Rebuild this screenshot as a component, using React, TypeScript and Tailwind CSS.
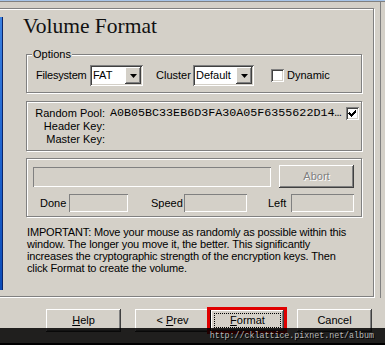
import React from "react";

const raised =
  "shadow-[inset_-1px_-1px_0_#404040,inset_1px_1px_0_#ffffff,inset_-2px_-2px_0_#808080,inset_2px_2px_0_#d4d0c8]";
const sunken2 =
  "shadow-[inset_1px_1px_0_#808080,inset_-1px_-1px_0_#ffffff,inset_2px_2px_0_#404040,inset_-2px_-2px_0_#d4d0c8]";
const sunken1 = "shadow-[inset_1px_1px_0_#808080,inset_-1px_-1px_0_#ffffff]";
const etched =
  "border border-[#808080] shadow-[inset_1px_1px_0_#ffffff,1px_1px_0_#ffffff]";

function Combo({ value, w }: { value: string; w: string }) {
  return (
    <div className={`${w} h-[21px] flex items-center bg-white ${sunken2}`}>
      <span className="pl-[3px] leading-[13px]">{value}</span>
      <div
        className={`ml-auto mr-[2px] w-[16px] h-[17px] bg-[#d4d0c8] flex items-center justify-center ${raised}`}
      >
        <svg width="7" height="4" viewBox="0 0 7 4">
          <polygon points="0,0 7,0 3.5,4" fill="#000" />
        </svg>
      </div>
    </div>
  );
}

function Check({ checked }: { checked?: boolean }) {
  return (
    <div className={`w-[13px] h-[13px] shrink-0 bg-white flex items-center justify-center ${sunken2}`}>
      {checked && (
        <svg width="9" height="9" viewBox="0 0 9 9" shapeRendering="crispEdges">
          <path d="M1 3h1v1h1v1h1v-1h1v-1h1v-1h1v-1h1v3h-1v1h-1v1h-1v1h-1v1h-1v-1h-1v-1h-1v-1h-1z" fill="#000" />
        </svg>
      )}
    </div>
  );
}

function Btn({ children, cls = "" }: { children: React.ReactNode; cls?: string }) {
  return (
    <div className={`w-[75px] h-[23px] flex items-center justify-center bg-[#d4d0c8] ${raised} ${cls}`}>
      {children}
    </div>
  );
}

export default function App() {
  return (
    <div className="w-[385px] h-[345px] relative overflow-hidden bg-[#d4d0c8] text-black text-[11px] leading-[13px] font-['Liberation_Sans',Arial,sans-serif]">
      <div className="h-px bg-[#a6c4e8]" />
      <div className="h-px bg-[#808080]" />
      <div className="flex h-[296px]">
        <div className={`ml-[-8px] mt-[6px] w-[382px] h-[289px] shrink-0 flex ${etched}`}>
          <div className="mt-[8px] w-[10px] h-[273px] shrink-0 bg-gradient-to-b from-[#3a80e0] via-[#1f64d0] to-[#0c4cb8] border-r border-[#0a246a]" />
          <div className="ml-[23px] w-[337px] flex flex-col">
            <div className="mt-[5px] ml-[-3px] h-[24px] leading-[24px] text-[21.5px] text-[#111] font-['Liberation_Serif','Times_New_Roman',serif] whitespace-nowrap">
              Volume Format
            </div>

            <div className={`relative mt-[16px] w-[336px] pt-[10px] pb-[6px] ${etched}`}>
              <span className="absolute top-[-7px] left-[5px] px-px bg-[#d4d0c8] leading-[13px]">
                Options
              </span>
              <div className="flex items-center h-[21px]">
                <span className="ml-[9px] w-[54px] whitespace-nowrap tracking-[-0.2px]">Filesystem</span>
                <Combo value="FAT" w="w-[53px]" />
                <span className="ml-[13px] w-[37px] whitespace-nowrap">Cluster</span>
                <Combo value="Default" w="w-[61px]" />
                <div className="ml-[17px]">
                  <Check />
                </div>
                <span className="ml-[3px]">Dynamic</span>
              </div>
            </div>

            <div className={`mt-[8px] w-[336px] pt-[5px] pb-[4px] ${etched}`}>
              <div className="flex items-center h-[13px]">
                <span className="w-[78px] text-right whitespace-nowrap">Random Pool:</span>
                <span className="ml-[5px] text-[11.7px] leading-[13px] font-['Liberation_Mono','Courier_New',monospace] whitespace-nowrap">
                  A0B05BC33EB6D3FA30A05F6355622D14…
                </span>
                <div className="ml-auto mr-[2px]">
                  <Check checked />
                </div>
              </div>
              <div className="flex items-center h-[13px]">
                <span className="w-[78px] text-right whitespace-nowrap">Header Key:</span>
              </div>
              <div className="flex items-center h-[13px]">
                <span className="w-[78px] text-right whitespace-nowrap">Master Key:</span>
              </div>
            </div>

            <div className={`mt-[7px] w-[336px] pt-[6px] pb-[4px] ${etched}`}>
              <div className="flex items-center h-[23px]">
                <div className={`ml-[6px] w-[238px] h-[20px] ${sunken1}`} />
                <Btn cls="ml-[8px]">
                  <span className="text-[#808080] [text-shadow:1px_1px_0_#ffffff]">Abort</span>
                </Btn>
              </div>
              <div className="mt-[6px] flex items-center h-[18px]">
                <span className="ml-[13px] w-[27px] whitespace-nowrap">Done</span>
                <div className={`ml-[2px] w-[59px] h-[18px] ${sunken1}`} />
                <span className="ml-[23px] w-[31px] whitespace-nowrap">Speed</span>
                <div className={`ml-[2px] w-[63px] h-[18px] ${sunken1}`} />
                <span className="ml-[21px] w-[21px] whitespace-nowrap">Left</span>
                <div className={`ml-[2px] w-[63px] h-[18px] ${sunken1}`} />
              </div>
            </div>

            <p className="mt-[9px] ml-px leading-[12px] tracking-[-0.15px] whitespace-nowrap">
              IMPORTANT: Move your mouse as randomly as possible within this
              <br />
              window. The longer you move it, the better. This significantly
              <br />
              increases the cryptographic strength of the encryption keys. Then
              <br />
              click Format to create the volume.
            </p>
          </div>
        </div>
        <div className="ml-[6px] w-px bg-[#808080]" />
      </div>

      <div className="mt-[11px] flex">
        <Btn cls="ml-[46px]">
          <span>
            <span className="underline">H</span>elp
          </span>
        </Btn>
        <Btn cls="ml-[14px]">
          <span>
            &lt; <span className="underline">P</span>rev
          </span>
        </Btn>
        <div className="relative w-[75px] h-[23px] border border-black">
          <div className={`w-full h-full flex items-center justify-center ${raised}`}>
            <span>
              <span className="underline">F</span>ormat
            </span>
          </div>
          <div className="absolute inset-[3px] border border-dotted border-black" />
        </div>
        <Btn cls="ml-[12px]">Cancel</Btn>
      </div>

      <div className="absolute left-[207px] top-[307px] w-[80px] h-[27px] border-[3px] border-[#e00000]" />

      <div className="absolute left-0 top-[328px] w-full h-[15px] bg-black/[0.85] flex items-center justify-end pr-[11px]">
        <span className="text-[8.3px] leading-[10px] text-[#b8b8b8] font-['Liberation_Mono','Courier_New',monospace] [text-shadow:1px_1px_0_#000000] whitespace-nowrap">
          http://cklattice.pixnet.net/album
        </span>
      </div>
      <div className="absolute left-0 top-[343px] w-full h-[2px] bg-black" />
    </div>
  );
}
